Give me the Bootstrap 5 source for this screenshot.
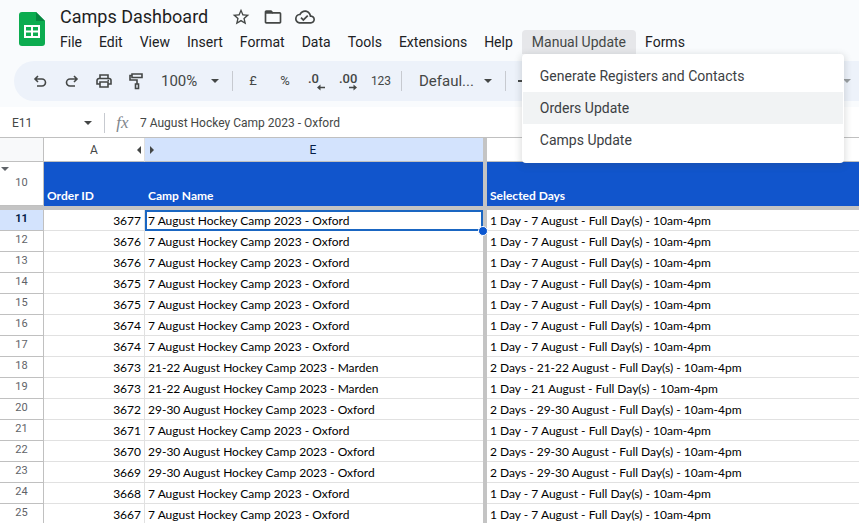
<!DOCTYPE html>
<html lang="en">
<head>
<meta charset="utf-8">
<meta name="viewport" content="width=device-width, initial-scale=1">
<title>Camps Dashboard</title>
<link rel="stylesheet" href="https://cdn.jsdelivr.net/npm/bootstrap@5.3.0/dist/css/bootstrap.min.css">
<style>
body{font-family:Roboto,"Liberation Sans",sans-serif;background:#f9fbfd;color:#202124;overflow:hidden}
button,select,input{font-family:inherit}
svg{display:block;flex:none}
.doc-head{padding:4px 0 1px 19px;gap:6px}
.doc-logo{margin-top:7px}
.doc-title{font-size:18px;line-height:26px;padding-left:8px;color:#1f1f1f}
.title-icons{gap:12px;padding-left:23px;color:#444746}
.plain-btn{border:0;background:none;padding:0;color:inherit}
.menu-bar{gap:1px}
.menu-item{font-size:14px;line-height:24px;padding:0 8px;border-radius:4px;white-space:nowrap;color:#202124}
.menu-wide .menu-item{padding:0 10px}
.menu-item.show{background:#e6e7ea;border-radius:4px 4px 0 0;color:#444746}
.script-menu{min-width:322px;padding:6px 1px 7px;border:0;border-radius:4px;box-shadow:0 2px 6px 2px rgba(60,64,67,.15);font-size:14px;top:100%;left:0}
.script-menu .dropdown-item{line-height:32px;padding:0 17px;color:#3c4043;font-size:14px}
.script-menu .dropdown-item.current{background:#f1f3f4}
.tool-strip{margin:6px 0 6px 14px;height:40px;padding-left:10px;background:#edf2fa;border-radius:20px 0 0 20px;color:#444746}
.tool-btn{width:32px;height:32px;font-size:13px;display:flex;align-items:center;justify-content:center}
.digit-btn{font-size:12px}
.rule-y{width:1px;height:20px;background:#c7cad0;flex:none}
.pick{display:flex;align-items:center;padding:0 5px 0 9px}
.pick select{appearance:none;border:0;background:none;padding:0;color:#444746;font-size:15px;outline:0}
.zoom-pick{width:50px}
.font-pick{width:65px}
.tri{width:0;height:0;border:4px solid transparent;border-top-color:currentColor;border-bottom:0;flex:none}
.formula-row{height:31px;background:#fff;border-bottom:1px solid #c0c0c0;color:#444746;padding-top:2px}
.formula-row input{border:0;background:none;padding:0;outline:0;color:#444746;font-size:12px}
.formula-row .rule-y{margin-left:12px}
.name-box{width:72px}
.fx-mark{font:italic 17px "Liberation Serif",serif;color:#80868b;width:35px;text-align:center}
.sheet-grid{width:100%;table-layout:fixed;border-collapse:separate;border-spacing:0;background:#fff;font-family:Lato,"Noto Sans",sans-serif;font-size:12px;line-height:16px;color:#000}
.sheet-grid td,.sheet-grid th{padding:0 3px;white-space:nowrap;overflow:hidden}
.sheet-grid tbody td,.sheet-grid tbody th{height:21px;border-bottom:1px solid #e1e1e1;vertical-align:bottom}
.sheet-grid tbody td{padding-bottom:1px}
.sheet-grid .num-col{font:400 11px/18px Roboto,sans-serif;text-align:center;vertical-align:top;color:#5f6368;border-right:1px solid #c0c0c0;border-bottom:1px solid #c0c0c0}
.sheet-grid .id-col{text-align:right;border-right:1px solid #e1e1e1}
.letters th{height:24px;font:400 12px/22px Roboto,sans-serif;text-align:center;color:#444746;border-bottom:1px solid #c0c0c0}
.letters .picked{color:#041e49}
.letters .corner{background:#f8f9fa;border-right:1px solid #c0c0c0}
.sheet-grid .freeze-y,.sheet-grid .freeze-x td{background:#c4c4c4;border:0;padding:0}
.sheet-grid .freeze-x td{height:4px;line-height:0}
.sheet-grid .titles td{height:44px;background:#1155cc;color:#fff;font-weight:700;vertical-align:bottom;padding-bottom:2px}
.sheet-grid .titles .freeze-y{background:#c4c4c4}
.sheet-grid .titles .num-col{background:#fff;vertical-align:top;padding:5px 0 0;color:#5f6368;font-weight:400}
.num-col .tri{margin:0 0 3px 1px}
.picked{background:#d3e3fd}
.sheet-grid .num-col.picked{color:#041e49;font-weight:700}
.sheet-grid .active-cell{outline:2px solid #1a66c2;outline-offset:-2px;overflow:visible;position:relative}
.active-cell::after{content:"";position:absolute;right:-5px;bottom:-6px;width:10px;height:10px;border:1px solid #fff;border-radius:50%;background:#0b57d0;z-index:1}
.side-arrow{width:0;height:0;border:4px solid transparent}
.side-arrow.to-left{border-right-color:#444746;border-left:0}
.side-arrow.to-right{border-left-color:#444746;border-right:0;margin-left:2px}
</style>
<script src="https://cdn.jsdelivr.net/npm/bootstrap@5.3.0/dist/js/bootstrap.bundle.min.js"></script>
</head>
<body class="vh-100">
<header class="doc-head d-flex align-items-start">
  <svg class="doc-logo" width="27" height="36" viewBox="0 0 27 36"><path d="M3 1h14l9 9v22a3 3 0 0 1-3 3H3a3 3 0 0 1-3-3V4a3 3 0 0 1 3-3z" fill="#0cac50"/><path d="M17 1l9 9h-9z" fill="#078540"/><path fill="#fff" fill-rule="evenodd" d="M5 14h16v13H5zM7 16v3.500h5V16zM14 16v3.500h5V16zM7 21.500V25h5v-3.500zM14 21.500V25h5v-3.500z"/></svg>
  <div>
    <div class="d-flex align-items-center">
      <h1 class="doc-title m-0 fw-normal">Camps Dashboard</h1>
      <div class="title-icons d-flex">
        <button class="plain-btn" aria-label="Star"><svg width="20" height="20" viewBox="0 0 24 24" fill="currentColor"><path d="M22 9.240l-7.190-.62L12 2 9.190 8.630 2 9.240l5.460 4.730L5.820 21 12 17.270 18.180 21l-1.630-7.030L22 9.240zM12 15.400l-3.760 2.270 1-4.280-3.320-2.880 4.380-.38L12 6.100l1.710 4.040 4.380.38-3.320 2.880 1 4.280L12 15.400z"/></svg></button>
        <button class="plain-btn" aria-label="Move"><svg width="20" height="20" viewBox="0 0 24 24" fill="currentColor"><path d="M9.170 6l2 2H20v10H4V6h5.170M10 4H4c-1.100 0-1.990.9-1.990 2L2 18c0 1.100.9 2 2 2h16c1.100 0 2-.9 2-2V8c0-1.100-.9-2-2-2h-8l-2-2z"/><path d="M3 5h7l2 3H3z"/></svg></button>
        <button class="plain-btn" aria-label="Saved to Drive"><svg width="20" height="20" viewBox="0 0 24 24" fill="currentColor"><path d="M19.350 10.040C18.670 6.590 15.640 4 12 4 9.110 4 6.600 5.640 5.350 8.040 2.340 8.360 0 10.910 0 14c0 3.310 2.690 6 6 6h13c2.760 0 5-2.240 5-5 0-2.640-2.050-4.780-4.650-4.960zM19 18H6c-2.210 0-4-1.790-4-4 0-2.050 1.530-3.760 3.560-3.970l1.070-.11.5-.95C8.080 7.140 9.940 6 12 6c2.620 0 4.880 1.860 5.390 4.430l.3 1.500 1.530.11c1.560.1 2.780 1.410 2.780 2.960 0 1.650-1.350 3-3 3zm-9-3.820l-2.090-2.090L6.500 13.500 10 17l6.010-6.010-1.410-1.410z"/></svg></button>
      </div>
    </div>
    <nav class="menu-bar d-flex" aria-label="Menu bar">
      <button class="plain-btn menu-item">File</button><button class="plain-btn menu-item">Edit</button><button class="plain-btn menu-item">View</button><button class="plain-btn menu-item">Insert</button><button class="plain-btn menu-item">Format</button><button class="plain-btn menu-item">Data</button><button class="plain-btn menu-item">Tools</button><button class="plain-btn menu-item">Extensions</button><button class="plain-btn menu-item">Help</button>
      <div class="dropdown menu-wide">
        <button class="plain-btn menu-item show" data-bs-toggle="dropdown" aria-expanded="true">Manual Update</button>
        <div class="dropdown-menu script-menu show">
          <button class="dropdown-item">Generate Registers and Contacts</button>
          <button class="dropdown-item current">Orders Update</button>
          <button class="dropdown-item">Camps Update</button>
        </div>
      </div>
      <button class="plain-btn menu-item">Forms</button>
    </nav>
  </div>
</header>
<div class="tool-strip d-flex align-items-center" role="toolbar" aria-label="Formatting">
  <button class="plain-btn tool-btn" aria-label="Undo"><svg width="14" height="14" viewBox="0 0 14 14" fill="none" stroke="currentColor" stroke-width="1.600"><path d="M5 2L2 5l3 3M2 5h7a3.500 3.500 0 0 1 0 7H4"/></svg></button>
  <button class="plain-btn tool-btn" aria-label="Redo"><svg width="14" height="14" viewBox="0 0 14 14" fill="none" stroke="currentColor" stroke-width="1.600"><path d="M9 2l3 3-3 3M12 5H5a3.500 3.500 0 0 0 0 7h5"/></svg></button>
  <button class="plain-btn tool-btn" aria-label="Print"><svg width="16" height="16" viewBox="0 0 16 16" fill="none" stroke="currentColor" stroke-width="1.600"><path d="M4 5V2h8v3M4 11H1V7.500A2 2 0 0 1 3 5.500h10a2 2 0 0 1 2 2V11h-3M4 9h8v5H4z"/><path d="M11.500 7.500h1.500"/></svg></button>
  <button class="plain-btn tool-btn" aria-label="Paint format"><svg width="16" height="18" viewBox="0 0 16 18" fill="none" stroke="currentColor" stroke-width="1.600"><path d="M4 2h10v3.500H4zM4 3.500H2v4.500h7v4M7.500 12h3v4.500h-3z"/></svg></button>
  <div class="pick"><select class="zoom-pick" aria-label="Zoom"><option>100%</option></select><span class="tri"></span></div>
  <span class="rule-y mx-1 ms-2"></span>
  <button class="plain-btn tool-btn">£</button>
  <button class="plain-btn tool-btn">%</button>
  <button class="plain-btn tool-btn" aria-label="Decrease decimal places"><svg width="22" height="20" viewBox="0 0 22 20" fill="currentColor" font-family="Roboto" font-size="13" font-weight="500"><text x="2" y="12">.0</text><path d="M11 16.500l3.500-3v2.200H19v1.600h-4.500v2.200z"/></svg></button>
  <button class="plain-btn tool-btn" aria-label="Increase decimal places"><svg width="22" height="20" viewBox="0 0 22 20" fill="currentColor" font-family="Roboto" font-size="13" font-weight="500"><text x="1" y="12">.00</text><path d="M19 16.500l-3.500-3v2.200H11v1.600h4.500v2.200z"/></svg></button>
  <button class="plain-btn tool-btn digit-btn">123</button>
  <span class="rule-y mx-1"></span>
  <div class="pick ms-1"><select class="font-pick" aria-label="Font"><option>Defaul...</option></select><span class="tri"></span></div>
  <span class="rule-y ms-2 me-1"></span>
  <button class="plain-btn tool-btn" aria-label="Decrease font size"><svg width="16" height="2"><path d="M0 0h16v2H0z" fill="currentColor"/></svg></button>
  <button class="plain-btn ms-auto me-1 pe-1 opacity-50" aria-label="More"><span class="tri d-block"></span></button>
</div>
<div class="formula-row d-flex align-items-center">
  <input class="name-box ms-2 ps-1" aria-label="Name box" value="E11"><span class="tri ms-1"></span>
  <span class="rule-y"></span>
  <span class="fx-mark">fx</span>
  <input class="formula-text flex-fill" aria-label="Formula" value="7 August Hockey Camp 2023 - Oxford">
</div>
<table class="sheet-grid">
  <colgroup><col style="width:44px"><col style="width:101px"><col style="width:338px"><col style="width:4px"><col></colgroup>
  <thead>
    <tr class="letters"><th class="corner"></th><th class="id-col"><div class="d-flex align-items-center ps-1"><span class="flex-fill text-center">A</span><span class="side-arrow to-left"></span></div></th><th class="picked"><div class="d-flex align-items-center pe-2"><span class="side-arrow to-right"></span><span class="flex-fill text-center">E</span></div></th><th class="freeze-y"></th><th></th></tr>
    <tr class="titles"><td class="num-col"><span class="tri d-block"></span><span class="d-block">10</span></td><td>Order ID</td><td>Camp Name</td><td class="freeze-y"></td><td>Selected Days</td></tr>
    <tr class="freeze-x"><td colspan="5"></td></tr>
  </thead>
  <tbody id="rows"></tbody>
</table>
<script>
const one = "7 August", ox = "Oxford";
const data = [[3677,one,ox],[3676,one,ox],[3676,one,ox],[3675,one,ox],[3675,one,ox],[3674,one,ox],[3674,one,ox],
  [3673,"21-22 August","Marden"],[3673,"21-22 August","Marden","21 August"],[3672,"29-30 August",ox],[3671,one,ox],
  [3670,"29-30 August",ox],[3669,"29-30 August",ox],[3668,one,ox],[3667,one,ox]];
document.getElementById("rows").innerHTML = data.map(([id, date, place, booked = date], i) => {
  const days = /^\d+-/.test(booked) ? "2 Days" : "1 Day";
  return `<tr><th class="num-col${i ? "" : " picked"}">${i + 11}</th><td class="id-col">${id}</td>` +
    `<td${i ? "" : ' class="active-cell"'}>${date} Hockey Camp 2023 - ${place}</td><td class="freeze-y"></td>` +
    `<td>${days} - ${booked} - Full Day(s) - 10am-4pm</td></tr>`;
}).join("");
</script>
</body>
</html>
